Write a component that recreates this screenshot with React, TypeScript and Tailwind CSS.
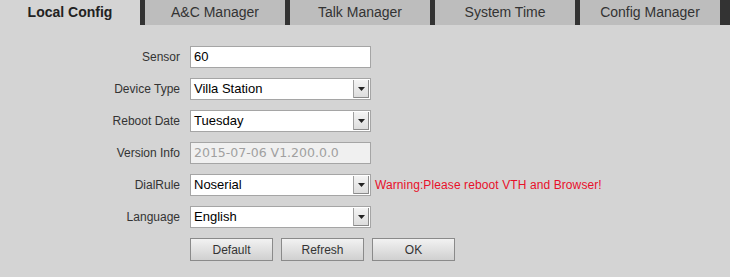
import React from 'react'

const tabs = ['Local Config', 'A&C Manager', 'Talk Manager', 'System Time', 'Config Manager']

function Arrow() {
  return (
    <div className="absolute right-[1px] top-[1px] bottom-[1px] w-[16px] flex items-center justify-center bg-gradient-to-b from-[#f4f4f4] to-[#dcdcdc] border-l border-[#a0a0a0] shadow-[inset_-1px_-1px_0_#8a8a8a]">
      <svg width="7" height="4" viewBox="0 0 7 4">
        <path d="M0 0h7L3.5 4z" fill="#222" />
      </svg>
    </div>
  )
}

function Row({ label, children }: { label: string; children: React.ReactNode }) {
  return (
    <div className="flex items-center h-[22px]">
      <div className="w-[180px] text-right text-[12px] text-[#333]">{label}</div>
      <div className="ml-[10px] flex items-center">{children}</div>
    </div>
  )
}

function Box({ value, select, disabled }: { value: string; select?: boolean; disabled?: boolean }) {
  return (
    <div
      className={`relative w-[181px] h-[22px] border border-[#a5a5a5] flex items-center px-[3px] ${
        disabled ? 'bg-[#f0f0f0] text-[#a0a0a0] font-["DejaVu_Sans",sans-serif] text-[12.5px]' : 'bg-white text-black text-[13px]'
      }`}
    >
      {value}
      {select && <Arrow />}
    </div>
  )
}

function Btn({ label }: { label: string }) {
  return (
    <button className="w-[83px] h-[23px] border border-[#8a8a8a] bg-gradient-to-b from-[#f2f2f2] to-[#d0d0d0] text-[12px] text-[#333]">
      {label}
    </button>
  )
}

export default function App() {
  return (
    <div className="w-[730px] h-[277px] bg-[#d4d4d4] font-['Liberation_Sans',Arial,sans-serif] overflow-hidden">
      {/* tabs */}
      <div className="flex h-[25px]">
        {tabs.map((t, i) => (
          <React.Fragment key={t}>
            <div
              className={`w-[140px] h-full flex items-center justify-center text-[14px] ${
                i === 0 ? 'bg-[#d4d4d4] font-bold text-[#222]' : 'bg-[#bdbdbd] text-[#333]'
              }`}
            >
              {t}
            </div>
            <div className={`${i === 4 ? 'w-[10px]' : 'w-[5px]'} h-full bg-[#333]`} />
          </React.Fragment>
        ))}
      </div>

      {/* form */}
      <div className="flex flex-col gap-[10px] pt-[21px]">
        <Row label="Sensor">
          <Box value="60" />
        </Row>
        <Row label="Device Type">
          <Box value="Villa Station" select />
        </Row>
        <Row label="Reboot Date">
          <Box value="Tuesday" select />
        </Row>
        <Row label="Version Info">
          <Box value="2015-07-06 V1.200.0.0" disabled />
        </Row>
        <Row label="DialRule">
          <Box value="Noserial" select />
          <span className="ml-[4px] text-[12px] tracking-[0.1px] text-[#e8102a]">Warning:Please reboot VTH and Browser!</span>
        </Row>
        <Row label="Language">
          <Box value="English" select />
        </Row>
        <div className="flex gap-[8px] ml-[190px]">
          <Btn label="Default" />
          <Btn label="Refresh" />
          <Btn label="OK" />
        </div>
      </div>
    </div>
  )
}
